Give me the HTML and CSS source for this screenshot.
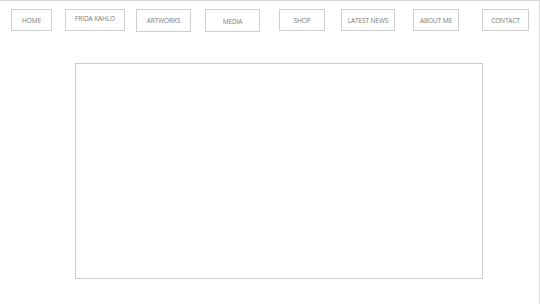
FILE: index.html
```html
<!DOCTYPE html>
<html lang="en">
<head>
    <meta charset="UTF-8">
    <meta name="viewport" content="width=device-width, initial-scale=1.0">
    <title>Frida Kahlo</title>
    <link rel="stylesheet" href="styles.css">
</head>
<body>
    <div class="page">
        <nav class="menu">
            <a class="menu-item home" href="#">HOME</a>
            <a class="menu-item frida" href="#">FRIDA KAHLO</a>
            <a class="menu-item artworks" href="#">ARTWORKS</a>
            <a class="menu-item media" href="#">MEDIA</a>
            <a class="menu-item shop" href="#">SHOP</a>
            <a class="menu-item news" href="#">LATEST NEWS</a>
            <a class="menu-item about" href="#">ABOUT ME</a>
            <a class="menu-item contact" href="#">CONTACT</a>
        </nav>
        <div class="stage"></div>
    </div>
</body>
</html>
```

FILE: styles.css
```css
html, body {
    margin: 0;
    padding: 0;
    background-color: #ffffff;
}

body {
    font-family: 'Open Sans', 'Liberation Sans', sans-serif;
}

.page {
    box-sizing: border-box;
    width: 540px;
    height: 304px;
    border-top: 1px solid #dcdcdc;
    border-right: 1px solid #dcdcdc;
}

.menu {
    display: flex;
    align-items: flex-start;
    padding: 8px 0 0 11px;
}

.menu-item {
    box-sizing: border-box;
    height: 22px;
    display: flex;
    align-items: center;
    justify-content: center;
    border: 1px solid #cfcfcf;
    color: #7a7a7a;
    font-size: 6.5px;
    text-decoration: none;
    letter-spacing: -0.1px;
}

.home { width: 41px; }
.frida { width: 60px; margin-left: 13px; padding-bottom: 3px; }
.artworks { width: 55px; margin-left: 11px; height: 23px; }
.media { width: 55px; margin-left: 14px; height: 23px; padding-top: 2px; }
.shop { width: 46px; margin-left: 19px; }
.news { width: 54px; margin-left: 16px; }
.about { width: 46px; margin-left: 18px; }
.contact { width: 47px; margin-left: 23px; }

.stage {
    box-sizing: border-box;
    width: 408px;
    height: 216px;
    margin: 31px 0 0 75px;
    border: 1px solid #cccccc;
}
```
